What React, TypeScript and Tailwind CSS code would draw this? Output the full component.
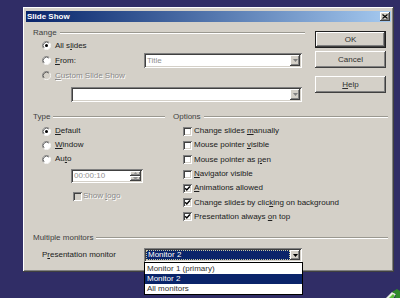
const RAISED =
  'shadow-[inset_-1px_-1px_#404040,inset_1px_1px_#ffffff,inset_-2px_-2px_#808080,inset_2px_2px_#d4d0c8]'

function Radio({ checked = false, disabled = false }: { checked?: boolean; disabled?: boolean }) {
  return (
    <svg width="9" height="9" viewBox="0 0 12 12" className="shrink-0">
      <circle cx="6" cy="6" r="5" fill={disabled ? '#d4d0c8' : '#ffffff'} />
      <path d="M2.11 9.89 A5.5 5.5 0 0 1 9.89 2.11" stroke="#808080" fill="none" />
      <path d="M9.89 2.11 A5.5 5.5 0 0 1 2.11 9.89" stroke="#ffffff" fill="none" />
      <path d="M2.82 9.18 A4.5 4.5 0 0 1 9.18 2.82" stroke="#404040" fill="none" />
      {checked && <circle cx="6" cy="6" r="2" fill="#000000" />}
    </svg>
  )
}

function Check({ checked = false, disabled = false }: { checked?: boolean; disabled?: boolean }) {
  return (
    <div
      className={`w-[9px] h-[9px] shrink-0 shadow-[inset_1px_1px_#808080,inset_-1px_-1px_#ffffff,inset_2px_2px_#404040,inset_-2px_-2px_#d4d0c8] ${
        disabled ? 'bg-[#d4d0c8]' : 'bg-white'
      }`}
    >
      {checked && (
        <svg width="9" height="9" viewBox="0 0 9 9">
          <path d="M2.2 4.2 L3.8 5.9 L6.9 2.6" stroke="#000" strokeWidth="1.4" fill="none" />
        </svg>
      )}
    </div>
  )
}

function Arrow({ color = '#000' }: { color?: string }) {
  return (
    <div className={`w-[10px] h-full bg-[#d4d0c8] flex items-center justify-center ${RAISED}`}>
      <svg width="5" height="3" viewBox="0 0 5 3">
        <path d="M0 0 H5 L2.5 3 Z" fill={color} />
      </svg>
    </div>
  )
}

function GroupHeader({ label }: { label: string }) {
  return (
    <div className="flex items-center h-[10px]">
      <span className="pl-[3px] pr-[3px] text-[#404040]">{label}</span>
      <div className="flex-1 h-[2px] border-t border-b border-t-[#9a9890] border-b-white" />
    </div>
  )
}

function Button({ children, isDefault = false }: { children: React.ReactNode; isDefault?: boolean }) {
  return (
    <div
      className={`h-[17px] flex items-center justify-center text-[#303030] bg-[#d4d0c8] ${
        isDefault
          ? 'border border-[#202020] shadow-[inset_-1px_-1px_#404040,inset_1px_1px_#ffffff,inset_-2px_-2px_#808080]'
          : RAISED
      }`}
    >
      {children}
    </div>
  )
}

const options: [React.ReactNode, boolean][] = [
  [<>Change slides <u>m</u>anually</>, false],
  [<>Mouse pointer <u>v</u>isible</>, false],
  [<>Mouse pointer as <u>p</u>en</>, false],
  [<><u>N</u>avigator visible</>, false],
  [<><u>A</u>nimations allowed</>, true],
  [<>Change slides by clic<u>k</u>ing on background</>, true],
  [<>Presentation always <u>o</u>n top</>, true],
]

export default function App() {
  return (
    <div className="relative w-[400px] h-[298px] overflow-hidden bg-[#302d66] pl-[23px] pt-[7px] font-['Liberation_Sans',Arial,sans-serif] text-[8px] leading-[10px] text-[#202020]">
      <div className={`relative w-[371px] h-[265px] bg-[#d4d0c8] pt-[4px] px-[3px] ${RAISED}`}>
        {/* title bar */}
        <div className="h-[11px] flex items-center justify-between bg-gradient-to-r from-[#0a246a] to-[#a6caf0] pl-[1px] pr-[1px]">
          <span className="font-bold text-white">Slide Show</span>
          <div className={`w-[10px] h-[9px] bg-[#d4d0c8] flex items-center justify-center ${RAISED}`}>
            <svg width="6" height="5" viewBox="0 0 6 5">
              <path d="M0.5 0.5 L5.5 4.5 M5.5 0.5 L0.5 4.5" stroke="#000" strokeWidth="1.2" />
            </svg>
          </div>
        </div>

        <div className="pl-[4px]">
          {/* range + buttons */}
          <div className="flex">
            <div className="w-[275px] pt-[6px]">
              <GroupHeader label="Range" />
              <div className="h-[15px] flex items-center pl-[12px]">
                <Radio checked />
                <span className="ml-[4px]">All s<u>l</u>ides</span>
              </div>
              <div className="h-[15px] flex items-center">
                <div className="w-[114px] flex items-center pl-[12px]">
                  <Radio />
                  <span className="ml-[4px]"><u>F</u>rom:</span>
                </div>
                <div className="w-[158px] h-[15px] bg-white flex items-stretch p-[2px] shadow-[inset_1px_1px_#808080,inset_-1px_-1px_#ffffff,inset_2px_2px_#404040,inset_-2px_-2px_#d4d0c8]">
                  <span className="flex-1 pl-[1px] text-[#909090] flex items-center">Title</span>
                  <Arrow color="#808080" />
                </div>
              </div>
              <div className="h-[15px] flex items-center pl-[12px]">
                <Radio disabled />
                <span className="ml-[4px] text-[#8a8a8a] [text-shadow:1px_1px_0_#ffffff]">
                  <u>C</u>ustom Slide Show
                </span>
              </div>
              <div className="mt-[4px] ml-[41px] w-[231px] h-[15px] bg-white flex justify-end p-[2px] shadow-[inset_1px_1px_#808080,inset_-1px_-1px_#ffffff,inset_2px_2px_#404040,inset_-2px_-2px_#d4d0c8]">
                <Arrow color="#808080" />
              </div>
            </div>
            <div className="w-[71px] ml-[10px] pt-[9px] flex flex-col">
              <Button isDefault>OK</Button>
              <div className="mt-[3px]">
                <Button>Cancel</Button>
              </div>
              <div className="mt-[8px]">
                <Button>
                  <span><u>H</u>elp</span>
                </Button>
              </div>
            </div>
          </div>

          {/* type + options */}
          <div className="flex mt-[10px]">
            <div className="w-[135px]">
              <GroupHeader label="Type" />
              <div className="mt-[2px]">
                <div className="h-[14px] flex items-center pl-[12px]">
                  <Radio checked />
                  <span className="ml-[4px]"><u>D</u>efault</span>
                </div>
                <div className="h-[14px] flex items-center pl-[12px]">
                  <Radio />
                  <span className="ml-[4px]"><u>W</u>indow</span>
                </div>
                <div className="h-[14px] flex items-center pl-[12px]">
                  <Radio />
                  <span className="ml-[4px]">Au<u>t</u>o</span>
                </div>
              </div>
              <div className="mt-[3px] ml-[41px] w-[72px] h-[14px] bg-white flex p-[2px] shadow-[inset_1px_1px_#808080,inset_-1px_-1px_#ffffff,inset_2px_2px_#404040,inset_-2px_-2px_#d4d0c8]">
                <span className="flex-1 pl-[1px] flex items-center text-[#909090]">00:00:10</span>
                <div className="w-[11px] flex flex-col">
                  <div className={`flex-1 bg-[#d4d0c8] flex items-center justify-center ${RAISED}`}>
                    <svg width="5" height="3" viewBox="0 0 5 3">
                      <path d="M0 3 H5 L2.5 0 Z" fill="#909090" />
                    </svg>
                  </div>
                  <div className={`flex-1 bg-[#d4d0c8] flex items-center justify-center ${RAISED}`}>
                    <svg width="5" height="3" viewBox="0 0 5 3">
                      <path d="M0 0 H5 L2.5 3 Z" fill="#909090" />
                    </svg>
                  </div>
                </div>
              </div>
              <div className="mt-[6px] h-[14px] flex items-center pl-[43px]">
                <Check disabled />
                <span className="ml-[1px] text-[#8a8a8a] [text-shadow:1px_1px_0_#ffffff]">
                  Show <u>l</u>ogo
                </span>
              </div>
            </div>
            <div className="w-[218px] ml-[5px]">
              <GroupHeader label="Options" />
              <div className="mt-[2px]">
                {options.map(([label, checked], i) => (
                  <div key={i} className="h-[14.3px] flex items-center pl-[13px]">
                    <Check checked={checked} />
                    <span className="ml-[2px]">{label}</span>
                  </div>
                ))}
              </div>
            </div>
          </div>

          {/* monitors */}
          <div className="w-[358px] mt-[9px]">
            <GroupHeader label="Multiple monitors" />
            <div className="mt-[5px] h-[14px] flex items-center">
              <div className="w-[114px] pl-[12px]">
                P<u>r</u>esentation monitor
              </div>
              <div className="relative w-[158px] h-[14px] bg-white flex p-[2px] shadow-[inset_1px_1px_#808080,inset_-1px_-1px_#ffffff,inset_2px_2px_#404040,inset_-2px_-2px_#d4d0c8]">
                <div className="flex-1 bg-[#0a246a] text-white flex items-center pl-[1px] border border-dotted border-[#c8c8a0]">
                  Monitor 2
                </div>
                <Arrow />
                <div className="absolute top-[14px] left-0 w-[159px] h-[33px] bg-white border border-black pt-[1px]">
                  <div className="h-[10px] flex items-center pl-[2px] text-[#303030]">Monitor 1 (primary)</div>
                  <div className="h-[10px] flex items-center pl-[2px] bg-[#0a246a] text-white">Monitor 2</div>
                  <div className="h-[10px] flex items-center pl-[2px] text-[#303030]">All monitors</div>
                </div>
              </div>
            </div>
          </div>
        </div>
      </div>

      {/* desktop icon peeking in the corner */}
      <svg className="absolute right-0 bottom-0" width="16" height="9" viewBox="0 0 16 9">
        <path d="M2 9 L8 3 L12 5 L9 9 Z" fill="#e8f0e0" />
        <path d="M8 3 L13 0 L16 2 L16 9 L11 9 L12 5 Z" fill="#2f8a2a" />
        <path d="M5 9 L9 5 L11 7 L9 9 Z" fill="#5cbf3a" />
      </svg>
    </div>
  )
}
